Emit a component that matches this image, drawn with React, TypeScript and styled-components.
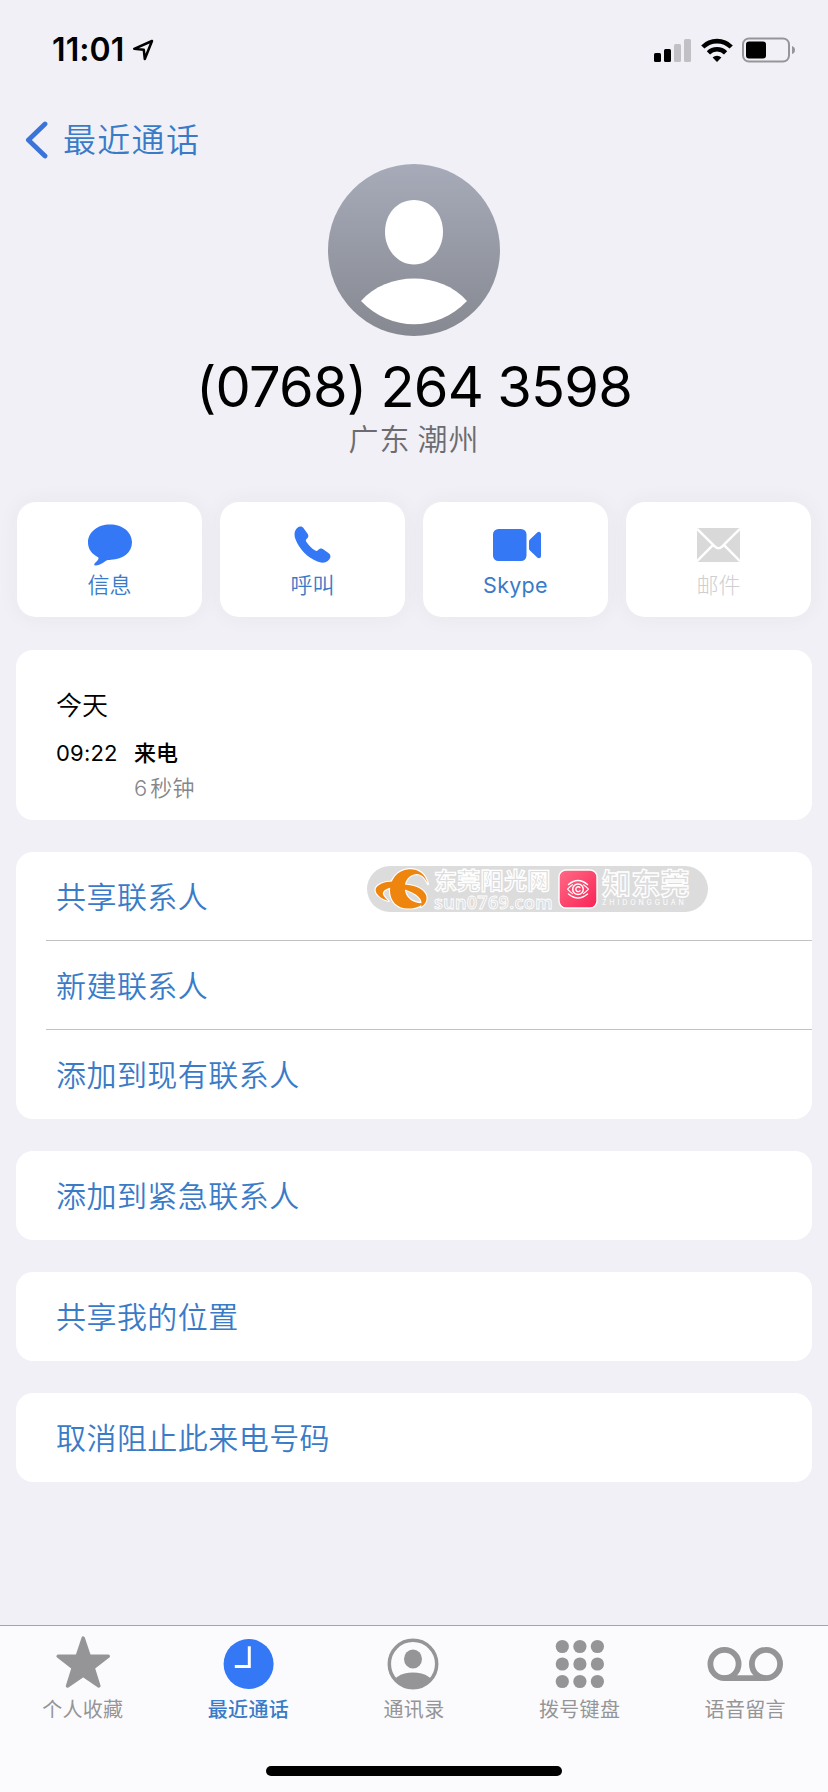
import React from 'react';
import styled, { createGlobalStyle } from 'styled-components';

const BLUE = '#3478f6';
const LINK = '#3a7bc8';
const GREY = '#959597';

const GlobalStyle = createGlobalStyle`
  * { box-sizing: border-box; }
  body {
    margin: 0;
    background: #f1f0f6;
    font-family: Inter, "Noto Sans CJK SC", sans-serif;
  }
  svg { display: block; flex: none; }
`;

const Screen = styled.div`
  width: 828px;
  height: 1792px;
  display: flex;
  flex-direction: column;
  background: #f1f0f6;
  overflow: hidden;
`;

const StatusBar = styled.header`
  height: 100px;
  flex: none;
  display: flex;
  justify-content: space-between;
  align-items: center;
  padding: 0 32px 0 52px;
`;

const Clock = styled.div`
  display: flex;
  align-items: center;
  gap: 8px;
  font-size: 32px;
  font-weight: 600;
  line-height: 40px;
  letter-spacing: 0.1px;
`;

const StatusIcons = styled.div`
  display: flex;
  align-items: center;
  gap: 9px;
`;

const BackButton = styled.nav`
  height: 64px;
  flex: none;
  padding: 16px 0 0 25px;
  display: flex;
  align-items: flex-start;
  gap: 15px;
  color: ${LINK};
  font-size: 33px;
  line-height: 49px;
  font-weight: 350;
  letter-spacing: 1.3px;
  svg { margin-top: 5px; }
`;

const Profile = styled.section`
  height: 338px;
  flex: none;
  display: flex;
  flex-direction: column;
  align-items: center;
`;

const PhoneNumber = styled.h1`
  margin: 16px 0 0;
  font-size: 56px;
  line-height: 70px;
  font-weight: 400;
  letter-spacing: -0.8px;
  word-spacing: -0.8px;
  white-space: pre;
`;

const Region = styled.div`
  font-size: 30px;
  line-height: 34px;
  font-weight: 350;
  letter-spacing: 1px;
  word-spacing: -2.5px;
  color: #6c6c70;
`;

const Actions = styled.section`
  display: grid;
  grid-template-columns: repeat(4, 185px);
  gap: 18px;
  padding: 0 17px;
  margin-bottom: 33px;
  flex: none;
`;

const Action = styled.button<{ $disabled?: boolean }>`
  height: 115px;
  border: 0;
  border-radius: 19px;
  background: #fff;
  box-shadow: 0 0 22px rgba(60, 60, 90, 0.05);
  padding: 18px 0 0;
  display: flex;
  flex-direction: column;
  align-items: center;
  font-family: inherit;
  font-size: 22px;
  line-height: 30px;
  font-weight: ${(p) => (p.$disabled ? 300 : 350)};
  color: ${(p) => (p.$disabled ? '#cfcfd1' : LINK)};
`;

const ActionIcon = styled.span`
  height: 49px;
  margin-bottom: 1px;
  display: flex;
  align-items: center;
`;

const ActionLabel = styled.span<{ $latin?: boolean }>`
  font-size: ${(p) => (p.$latin ? 21.5 : 22)}px;
  font-weight: ${(p) => (p.$latin ? 400 : 'inherit')};
  letter-spacing: ${(p) => (p.$latin ? 0.3 : 0)}px;
`;

const Card = styled.section`
  position: relative;
  margin: 0 16px 32px;
  border-radius: 17px;
  background: #fff;
  flex: none;
`;

const CallCard = styled(Card)`
  height: 170px;
  padding: 37px 40px 0;
`;

const Day = styled.div`
  font-size: 26px;
  line-height: 38px;
  font-weight: 350;
  margin-bottom: 11px;
`;

const CallEntry = styled.div`
  display: grid;
  grid-template-columns: 78px 1fr;
  font-size: 22px;
  line-height: 34px;
`;

const CallTime = styled.span`
  letter-spacing: 0.2px;
`;

const CallKind = styled.span`
  font-weight: 500;
`;

const Duration = styled.span`
  grid-column: 2;
  font-weight: 350;
  color: #85858a;
  line-height: 36px;
  letter-spacing: 0.2px;
  word-spacing: -3.5px;
`;

const Row = styled.div`
  height: 89px;
  margin-left: 30px;
  padding-left: 10px;
  font-size: 30px;
  line-height: 90px;
  font-weight: 350;
  letter-spacing: 0.45px;
  color: ${LINK};
  &:not(:last-of-type) { border-bottom: 1px solid #c2c2c5; }
`;

const Watermark = styled.aside`
  position: absolute;
  left: 351px;
  top: 14px;
  width: 341px;
  height: 46px;
  border-radius: 23px;
  background: #dcdcdc;
  display: flex;
  align-items: center;
  padding-left: 7px;
  color: #dcdcdc;
  white-space: nowrap;
`;

const Brand = styled.div<{ $width: number }>`
  width: ${(p) => p.$width}px;
  flex: none;
  margin-left: 4px;
  display: flex;
  flex-direction: column;
`;

const BrandName = styled.span<{ $size: number }>`
  font-size: ${(p) => p.$size}px;
  line-height: 26px;
  font-weight: 700;
  letter-spacing: 0.3px;
  -webkit-text-stroke: 1.3px #fff;
`;

const BrandSite = styled.span`
  font-family: "Noto Sans", sans-serif;
  font-size: 18px;
  line-height: 16px;
  font-weight: 600;
  letter-spacing: 0.3px;
  -webkit-text-stroke: 0.8px #fff;
`;

const BrandPinyin = styled.span`
  font-size: 7px;
  line-height: 9px;
  color: #fff;
  letter-spacing: 2.9px;
`;

const TabBar = styled.footer`
  margin-top: auto;
  height: 167px;
  flex: none;
  border-top: 1px solid #a6a6a9;
  background: #fbfbfd;
  display: flex;
  flex-direction: column;
  align-items: center;
`;

const Tabs = styled.div`
  width: 100%;
  height: 140px;
  display: grid;
  grid-template-columns: repeat(5, 1fr);
`;

const Tab = styled.div<{ $active?: boolean }>`
  display: flex;
  flex-direction: column;
  align-items: center;
  padding-top: 8px;
  font-size: 20px;
  line-height: 30px;
  font-weight: ${(p) => (p.$active ? 500 : 400)};
  letter-spacing: 0.3px;
  color: ${(p) => (p.$active ? LINK : GREY)};
  svg { margin-bottom: 5px; }
`;

const HomeIndicator = styled.div`
  width: 296px;
  height: 10px;
  border-radius: 5px;
  background: #000;
`;

const LocationArrow = () => (
  <svg width="22" height="22" viewBox="0 0 22 22" fill="none" stroke="#000" strokeWidth="2.5" strokeLinejoin="round">
    <path d="M20 2 L2.2 9.8 L11.8 10.8 L12.8 20 Z" />
  </svg>
);

const Signal = () => (
  <svg width="38" height="25" viewBox="0 0 38 25">
    <rect x="0" y="15" width="7" height="9" rx="1.5" />
    <rect x="10" y="11" width="7" height="13" rx="1.5" />
    <rect x="20" y="6" width="7" height="18" rx="1.5" fill="#c1c1c5" />
    <rect x="30" y="1" width="7" height="23" rx="1.5" fill="#c1c1c5" />
  </svg>
);

const Wifi = () => (
  <svg width="32" height="25" viewBox="0 0 32 25">
    <g fill="none" stroke="#000" strokeWidth="4.6">
      <path d="M1.8 9 A20 20 0 0 1 30.2 9" />
      <path d="M7.4 14.8 A12.3 12.3 0 0 1 24.6 14.8" />
    </g>
    <path d="M16 24 L11.6 19.6 A6.3 6.3 0 0 1 20.4 19.6 Z" />
  </svg>
);

const Battery = () => (
  <svg width="54" height="26" viewBox="0 0 54 26">
    <rect x="1" y="1.4" width="46" height="23.2" rx="6" fill="none" stroke="#96969a" strokeWidth="2" />
    <rect x="4" y="4.6" width="20" height="16.800" rx="3" />
    <path d="M50 9 V17 Q53 16 53 13 Q53 10 50 9 Z" fill="#96969a" />
  </svg>
);

const Chevron = () => (
  <svg width="23" height="38" viewBox="0 0 23 38" fill="none" stroke="#3b74d8" strokeWidth="4.8" strokeLinecap="round" strokeLinejoin="round">
    <path d="M20 3 L3.400 19 L20 35" />
  </svg>
);

const Avatar = () => (
  <svg width="172" height="172" viewBox="0 0 172 172">
    <defs>
      <linearGradient id="avatarFill" x1="0" y1="0" x2="0" y2="1">
        <stop offset="0" stopColor="#a7abb9" />
        <stop offset="1" stopColor="#868991" />
      </linearGradient>
    </defs>
    <circle cx="86" cy="86" r="86" fill="url(#avatarFill)" />
    <path d="M86 36 C103 36 115 50 115 68 C115 86 102 100.5 86 100.5 C70 100.5 57 86 57 68 C57 50 69 36 86 36 Z" fill="#fff" />
    <path d="M33 137 C59 107 113 107 139 137 C109 168 63 168 33 137 Z" fill="#fff" />
  </svg>
);

const MessageIcon = () => (
  <svg width="44" height="42" viewBox="0 0 44 42" fill={BLUE}>
    <path d="M22 0.5 C34.5 0.5 44 8.2 44 18.3 C44 28.4 35 35.6 23 35.8 C20.5 36 19.5 36 18 36.8 C14.5 39.2 11 41.6 7.5 41.4 C6 41.3 5.8 40.2 6.8 39.2 C8.8 37 11.200 35.200 10.400 33.4 C3.6 30 0 25 0 18.5 C0 8.2 9.5 0.5 22 0.5 Z" />
  </svg>
);

const PhoneIcon = () => (
  <svg width="37" height="37" viewBox="0 0 37 37" fill={BLUE}>
    <path d="M3.2 2 C5.4 0 8.2 0.2 9.8 2.4 L13.6 7.8 C15.2 10.2 14 11.6 12.6 13 C11.6 14 11.7 14.8 12.3 15.8 C14.6 19.4 17.4 22.2 21.2 24.6 C22.2 25.2 23.1 25.1 24 24.2 C25.5 22.5 27.2 21.8 29.2 23.3 L34.4 27 C36.9 28.8 37 31.2 35.2 33.4 C32.4 36.8 28 37.5 23.4 35.6 C13.4 31.6 5.6 23.6 1.6 13.6 C-0.2 9 0.2 4.8 3.2 2 Z" />
  </svg>
);

const VideoIcon = () => (
  <svg width="51" height="32" viewBox="-3 0 51 32" fill={BLUE}>
    <rect x="0" y="0" width="33.5" height="32" rx="5.5" />
    <path d="M36 12.5 Q36 11.3 36.9 10.4 L44 3.8 Q45.2 2.6 46.6 2.9 Q48 3.2 48 5 V27 Q48 28.8 46.6 29.1 Q45.2 29.4 44 28.2 L36.9 21.6 Q36 20.7 36 19.5 Z" />
  </svg>
);

const MailIcon = () => (
  <svg width="43" height="34" viewBox="0 0 43 34">
    <rect width="43" height="34" rx="1" fill="#d9d9da" />
    <path d="M0 0.8 L18 18.6 Q21.5 22 25 18.6 L43 0.8 M0 33.2 L15.6 17.4 M43 33.2 L27.4 17.4" fill="none" stroke="#fff" strokeWidth="2.4" />
  </svg>
);

const SWOOSHES = [
  'M54 16 C51 5 44 0.8 35 1.200 C23 2 16 12 16 22.500 C16 33 23 40.500 34 40.500 C41 40.500 47 38.500 49.500 35 C41 36 32.500 31.500 31 22.500 C29.500 13 35 6.500 42.500 6 C47.500 6 51.500 10 54 16 Z',
  'M29 16.600 C38 16.500 49 20 52 27 C53.500 31 52 36 47 39 C49.500 32 45 26 29.500 21 Z',
  'M19 13.600 C10 13.600 2.500 17 1.600 21.500 C1.300 26 7 31 14.500 33 C10.500 29.500 7.500 26 9.500 23.500 C11 21.500 14 20.300 17.500 19.600 Z',
];

const SwooshLogo = () => (
  <svg width="56" height="42" viewBox="0 0 56 42">
    <g stroke="#fff" strokeWidth="2.2" fill="#fff" strokeLinejoin="round">
      {SWOOSHES.map((d) => <path key={d} d={d} />)}
    </g>
    <g fill="#ee850f">
      {SWOOSHES.map((d) => <path key={d} d={d} />)}
    </g>
  </svg>
);

const EyeLogo = () => (
  <svg width="40" height="40" viewBox="0 0 40 40">
    <defs>
      <linearGradient id="eyeFill" x1="0" y1="0" x2="1" y2="1">
        <stop offset="0" stopColor="#ff6b86" />
        <stop offset="1" stopColor="#f92355" />
      </linearGradient>
    </defs>
    <rect x="1" y="1" width="38" height="38" rx="7" fill="url(#eyeFill)" stroke="#fff" strokeWidth="1.4" />
    <g fill="none" stroke="#fff" strokeWidth="1.5" strokeLinecap="round">
      <path d="M10.500 15.500 Q20 7.500 29.500 15.500 M10.500 25 Q20 33 29.500 25" />
      <path d="M9.500 20.200 Q12 17.500 14.500 15.800 M9.500 20.200 Q12 23 14.500 24.600 M30.500 20.200 Q28 17.500 25.500 15.800 M30.500 20.200 Q28 23 25.500 24.600" strokeWidth="1.1" />
      <circle cx="20" cy="20.200" r="5.300" strokeWidth="1.500" />
      <path d="M22 18.600 A2.400 2.400 0 1 0 22 21.800" strokeWidth="1.400" />
    </g>
  </svg>
);

const StarIcon = () => (
  <svg width="56" height="56" viewBox="0 0 56 56" fill={GREY} stroke={GREY} strokeWidth="3.4" strokeLinejoin="round">
    <path d="M28.200 4 L34.300 22.200 L53.300 22.200 L38.200 33.800 L43.900 52 L28.200 41.300 L12.500 52 L18.200 33.800 L3.100 22.200 L22.100 22.200 Z" />
  </svg>
);

const RecentsIcon = () => (
  <svg width="56" height="56" viewBox="0 0 56 56">
    <circle cx="28.600" cy="30" r="25" fill={BLUE} />
    <path d="M29.300 12.300 V32.500 H14.800" fill="none" stroke="#fff" strokeWidth="3" />
  </svg>
);

const ContactsIcon = () => (
  <svg width="56" height="56" viewBox="0 0 56 56">
    <defs>
      <clipPath id="contactRing"><circle cx="27" cy="30" r="24" /></clipPath>
    </defs>
    <g fill={GREY} clipPath="url(#contactRing)">
      <ellipse cx="27" cy="25" rx="9" ry="9.600" />
      <ellipse cx="27" cy="53" rx="22" ry="14.500" />
    </g>
    <circle cx="27" cy="30" r="23.700" fill="none" stroke={GREY} strokeWidth="3.500" />
  </svg>
);

const KeypadIcon = () => (
  <svg width="56" height="56" viewBox="0 0 56 56" fill={GREY}>
    {[12.5, 30, 47.5].map((y) => [10.3, 27.9, 45.4].map((x) => (
      <circle key={`${x}-${y}`} cx={x} cy={y} r="6.600" />
    )))}
  </svg>
);

const VoicemailIcon = () => (
  <svg width="78" height="56" viewBox="0 0 78 56" fill="none" stroke={GREY} strokeWidth="5.800">
    <circle cx="18.500" cy="30" r="14.100" />
    <circle cx="60" cy="30" r="14.100" />
    <path d="M18.500 44.100 H60" />
  </svg>
);

const ACTIONS = [
  { label: '信息', icon: <MessageIcon /> },
  { label: '呼叫', icon: <PhoneIcon /> },
  { label: 'Skype', icon: <VideoIcon />, latin: true },
  { label: '邮件', icon: <MailIcon />, disabled: true },
];

const TABS = [
  { label: '个人收藏', icon: <StarIcon /> },
  { label: '最近通话', icon: <RecentsIcon />, active: true },
  { label: '通讯录', icon: <ContactsIcon /> },
  { label: '拨号键盘', icon: <KeypadIcon /> },
  { label: '语音留言', icon: <VoicemailIcon /> },
];

export default function App() {
  return (
    <>
      <GlobalStyle />
      <Screen>
        <StatusBar>
          <Clock>11:01<LocationArrow /></Clock>
          <StatusIcons><Signal /><Wifi /><Battery /></StatusIcons>
        </StatusBar>
        <BackButton><Chevron />最近通话</BackButton>
        <Profile>
          <Avatar />
          <PhoneNumber>(0768) 264 3598</PhoneNumber>
          <Region>广东 潮州</Region>
        </Profile>
        <Actions>
          {ACTIONS.map((a) => (
            <Action key={a.label} $disabled={a.disabled}>
              <ActionIcon>{a.icon}</ActionIcon>
              <ActionLabel $latin={a.latin}>{a.label}</ActionLabel>
            </Action>
          ))}
        </Actions>
        <CallCard>
          <Day>今天</Day>
          <CallEntry>
            <CallTime>09:22</CallTime>
            <CallKind>来电</CallKind>
            <Duration>6 秒钟</Duration>
          </CallEntry>
        </CallCard>
        <Card>
          <Row>共享联系人</Row>
          <Row>新建联系人</Row>
          <Row>添加到现有联系人</Row>
          <Watermark>
            <SwooshLogo />
            <Brand $width={124}>
              <BrandName $size={23}>东莞阳光网</BrandName>
              <BrandSite>sun0769.com</BrandSite>
            </Brand>
            <EyeLogo />
            <Brand $width={92}>
              <BrandName $size={29}>知东莞</BrandName>
              <BrandPinyin>ZHIDONGGUAN</BrandPinyin>
            </Brand>
          </Watermark>
        </Card>
        <Card><Row>添加到紧急联系人</Row></Card>
        <Card><Row>共享我的位置</Row></Card>
        <Card><Row>取消阻止此来电号码</Row></Card>
        <TabBar>
          <Tabs>
            {TABS.map((t) => (
              <Tab key={t.label} $active={t.active}>{t.icon}{t.label}</Tab>
            ))}
          </Tabs>
          <HomeIndicator />
        </TabBar>
      </Screen>
    </>
  );
}
